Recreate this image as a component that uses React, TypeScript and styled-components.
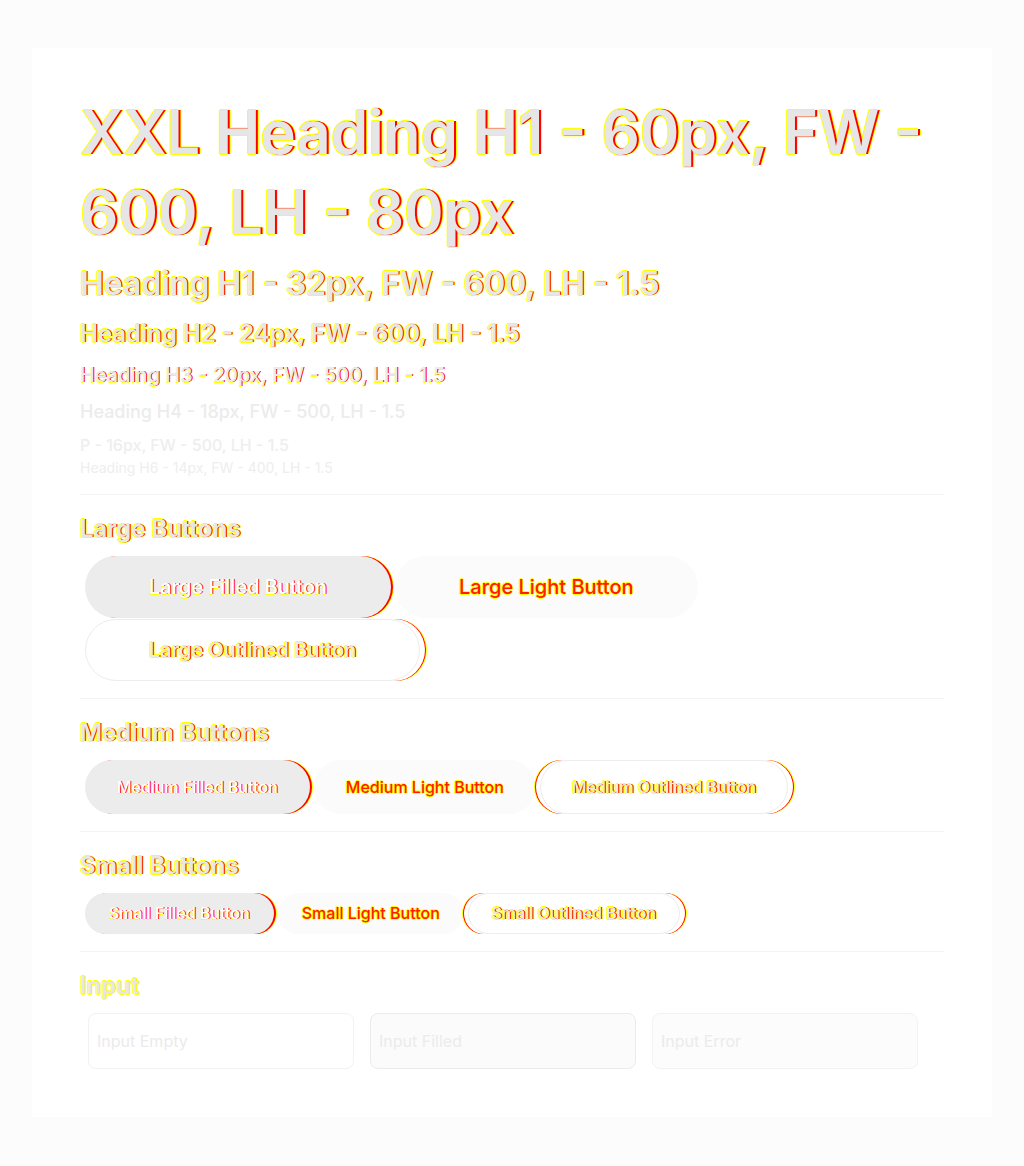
import React from 'react'
import styled, { createGlobalStyle, css } from 'styled-components'

type Fringe = 'none' | 'thin' | 'soft' | 'mixed' | 'strong'

const RED = '#ff0000'
const YELLOW = '#ffff00'

const fringe = (f: Fringe = 'none') => {
    if (f === 'strong') {
        return css`
            text-shadow: 1px 0 0 ${RED}, 2px 0 0 ${RED}, 3px 0 0 ${YELLOW}, 0 -1px 0 ${YELLOW},
                0 1px 0 ${YELLOW}, -1px 0 0 ${YELLOW};
        `
    }
    if (f === 'mixed') {
        return css`
            text-shadow: 1px 0 0 ${RED}, 2px 0 0 ${YELLOW}, 0 -1px 0 ${YELLOW}, 0 1px 0 ${YELLOW},
                -1px 0 0 ${YELLOW};
        `
    }
    if (f === 'soft') {
        return css`
            text-shadow: 1px 0 0 ${YELLOW}, 0 -1px 0 ${YELLOW}, 0 1px 0 ${YELLOW}, -1px 0 0 ${YELLOW};
        `
    }
    if (f === 'thin') {
        return css`
            text-shadow: 1px 0 0 ${RED}, 0 1px 0 ${YELLOW};
        `
    }
    return css``
}

const GlobalStyle = createGlobalStyle`
    * { box-sizing: border-box; }
    body {
        margin: 0;
        background: #fcfcfc;
        font-family: Inter, "Noto Sans", sans-serif;
        color: #e8e8e8;
    }
`

const Page = styled.div`
    padding: 48px 32px;
`

const Card = styled.main`
    background: #ffffff;
    padding: 44px 48px 48px;
`

const Type = styled.div`
    padding-bottom: 16px;
`

const Text = styled.p<{ $size: number; $lh: string; $weight: number; $gap?: number; $fx?: Fringe; $tone?: string }>`
    margin: 0 0 ${({ $gap }) => ($gap ?? 8)}px;
    font-size: ${({ $size }) => $size}px;
    line-height: ${({ $lh }) => $lh};
    font-weight: ${({ $weight }) => $weight};
    color: ${({ $tone }) => $tone ?? '#e7e7e7'};
    ${({ $fx }) => fringe($fx)}
`

const Section = styled.section`
    border-top: 1px solid #f4f4f4;
    padding: 16px 0;
    &:last-child {
        padding-bottom: 0;
    }
`

const SectionTitle = styled.h2<{ $fx?: Fringe }>`
    margin: 0 0 8px;
    font-size: 24px;
    line-height: 1.5;
    font-weight: 600;
    color: #e7e7e7;
    ${({ $fx }) => fringe($fx)}
`

const ButtonRow = styled.div`
    display: flex;
    flex-wrap: wrap;
    gap: 1px 4px;
    padding: 1px 5px;
`

type Size = 'large' | 'medium' | 'small'
type Variant = 'filled' | 'light' | 'outlined'

const sizes = {
    large: css`font-size: 20px; line-height: 30px; padding: 15px 63px;`,
    medium: css`font-size: 16px; line-height: 24px; padding: 14px 31px;`,
    small: css`font-size: 16px; line-height: 23px; padding: 8px 23px;`,
}

const Button = styled.button<{ $size: Size; $variant: Variant }>`
    font-family: Inter, "Noto Sans", sans-serif;
    font-weight: 500;
    border-radius: 999px;
    border: 1px solid transparent;
    cursor: pointer;
    white-space: nowrap;
    ${({ $size }) => sizes[$size]}

    ${({ $variant, $size }) =>
        $variant === 'filled'
            ? css`
                  background: #ececec;
                  color: #ffffff;
                  box-shadow: 2px 0 0 0 ${RED}, 3px 0 0 0 ${YELLOW};
                  ${fringe('thin')}
              `
            : $variant === 'light'
            ? css`
                  background: #fbfbfb;
                  color: #ff1a00;
                  ${fringe('soft')}
              `
            : css`
                  background: #ffffff;
                  border-color: #ededed;
                  color: #e9e9e9;
                  box-shadow: 5px 0 0 0 #ffffff, 6px 0 0 0 ${RED}, 7px 0 0 0 ${YELLOW}
                      ${$size !== 'large' ? `, -4px 0 0 0 #ffffff, -5px 0 0 0 ${RED}, -6px 0 0 0 ${YELLOW}` : ''};
                  ${fringe('mixed')}
              `}
`

const InputRow = styled.div`
    display: flex;
    gap: 16px;
    padding: 1px 8px 0;
`

const Field = styled.input<{ $state: 'empty' | 'filled' | 'error' }>`
    width: 266px;
    height: 56px;
    padding: 0 8px;
    border-radius: 8px;
    font-family: Inter, "Noto Sans", sans-serif;
    font-size: 16px;
    color: #e9e9e9;
    outline: none;
    border: 1px solid ${({ $state }) => ($state === 'filled' ? '#ebebeb' : '#f2f2f2')};
    background: ${({ $state }) => ($state === 'empty' ? '#ffffff' : $state === 'filled' ? '#fbfbfb' : '#fcfcfc')};
    &::placeholder {
        color: #ebebeb;
    }
`

const buttonSets: { title: string; size: Size; label: string; fx: Fringe }[] = [
    { title: 'Large Buttons', size: 'large', label: 'Large', fx: 'mixed' },
    { title: 'Medium Buttons', size: 'medium', label: 'Medium', fx: 'mixed' },
    { title: 'Small Buttons', size: 'small', label: 'Small', fx: 'mixed' },
]

const App = () => {
    return (
        <Page>
            <GlobalStyle />
            <Card>
                <Type>
                    <Text as="h1" $size={60} $lh="80px" $weight={600} $fx="strong" $tone="#e6e6e6">
                        XXL Heading H1 - 60px, FW - 600, LH - 80px
                    </Text>
                    <Text as="h1" $size={32} $lh="1.5" $weight={600} $fx="mixed">
                        Heading H1 - 32px, FW - 600, LH - 1.5
                    </Text>
                    <Text as="h2" $size={24} $lh="1.5" $weight={600} $fx="mixed">
                        Heading H2 - 24px, FW - 600, LH - 1.5
                    </Text>
                    <Text as="h3" $size={20} $lh="1.5" $weight={500} $fx="thin" $tone="#eaeaea">
                        Heading H3 - 20px, FW - 500, LH - 1.5
                    </Text>
                    <Text as="h4" $size={18} $lh="1.5" $weight={500} $tone="#ececec">
                        Heading H4 - 18px, FW - 500, LH - 1.5
                    </Text>
                    <Text $size={16} $lh="1.5" $weight={500} $gap={0} $tone="#eeeeee">
                        P - 16px, FW - 500, LH - 1.5
                    </Text>
                    <Text as="h6" $size={14} $lh="1.5" $weight={400} $gap={0} $tone="#eeeeee">
                        Heading H6 - 14px, FW - 400, LH - 1.5
                    </Text>
                </Type>

                {buttonSets.map((set) => (
                    <Section key={set.title}>
                        <SectionTitle $fx={set.fx}>{set.title}</SectionTitle>
                        <ButtonRow>
                            <Button $size={set.size} $variant="filled">{set.label} Filled Button</Button>
                            <Button $size={set.size} $variant="light">{set.label} Light Button</Button>
                            <Button $size={set.size} $variant="outlined">{set.label} Outlined Button</Button>
                        </ButtonRow>
                    </Section>
                ))}

                <Section>
                    <SectionTitle $fx="soft">Input</SectionTitle>
                    <InputRow>
                        <Field $state="empty" placeholder="Input Empty" />
                        <Field $state="filled" placeholder="Input Filled" />
                        <Field $state="error" placeholder="Input Error" />
                    </InputRow>
                </Section>
            </Card>
        </Page>
    )
}

export default App
